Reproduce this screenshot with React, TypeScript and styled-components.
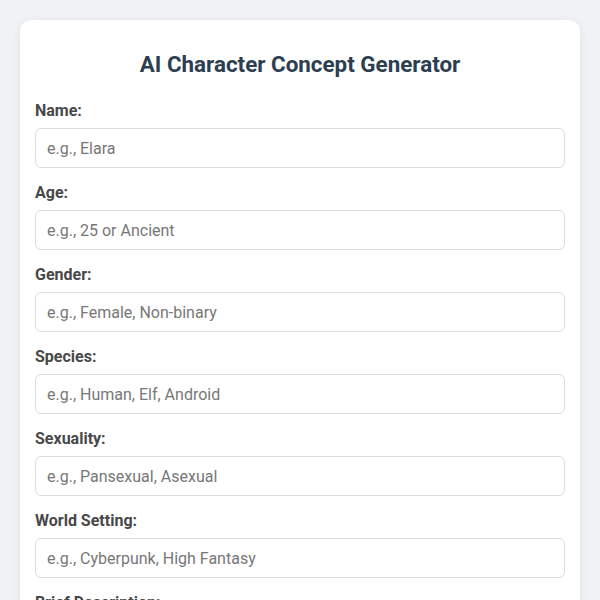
import styled, { createGlobalStyle } from "styled-components";

const GlobalStyle = createGlobalStyle`
  body {
    margin: 0;
    background: #f0f2f5;
    font-family: Roboto, "Noto Sans", Arial, sans-serif;
  }
  * {
    box-sizing: border-box;
  }
`;

const Page = styled.div`
  padding: 20px;
`;

const Card = styled.div`
  background: #fff;
  border-radius: 12px;
  box-shadow: 0 2px 10px rgba(0, 0, 0, 0.08);
  padding: 31px 15px 20px;
`;

const Title = styled.h2`
  margin: 0 0 25px;
  text-align: center;
  font-size: 22.4px;
  font-weight: 700;
  line-height: 26px;
  color: #2c3e50;
`;

const Field = styled.div`
  display: flex;
  flex-direction: column;
  margin-bottom: 16px;
`;

const Label = styled.label`
  font-size: 16px;
  font-weight: 700;
  line-height: 18px;
  color: #484848;
  margin-bottom: 8px;
`;

const Input = styled.input`
  width: 100%;
  height: 40px;
  padding: 10px 11px;
  font-family: inherit;
  font-size: 16px;
  color: #333;
  border: 1px solid #ddd;
  border-radius: 6px;
  outline: none;
  &::placeholder {
    color: #777;
  }
`;

const TextArea = styled.textarea`
  width: 100%;
  height: 100px;
  padding: 10px 11px;
  font-family: inherit;
  font-size: 16px;
  border: 1px solid #ddd;
  border-radius: 6px;
  resize: vertical;
  &::placeholder {
    color: #777;
  }
`;

const fields = [
  { label: "Name:", placeholder: "e.g., Elara" },
  { label: "Age:", placeholder: "e.g., 25 or Ancient" },
  { label: "Gender:", placeholder: "e.g., Female, Non-binary" },
  { label: "Species:", placeholder: "e.g., Human, Elf, Android" },
  { label: "Sexuality:", placeholder: "e.g., Pansexual, Asexual" },
  { label: "World Setting:", placeholder: "e.g., Cyberpunk, High Fantasy" },
];

const App = () => {
  return (
    <Page>
      <GlobalStyle />
      <Card>
        <Title>AI Character Concept Generator</Title>
        {fields.map((f) => (
          <Field key={f.label}>
            <Label>{f.label}</Label>
            <Input placeholder={f.placeholder} />
          </Field>
        ))}
        <Field>
          <Label>Brief Description:</Label>
          <TextArea placeholder="e.g., A rogue hacker with a hidden past" />
        </Field>
      </Card>
    </Page>
  );
};

export default App;
